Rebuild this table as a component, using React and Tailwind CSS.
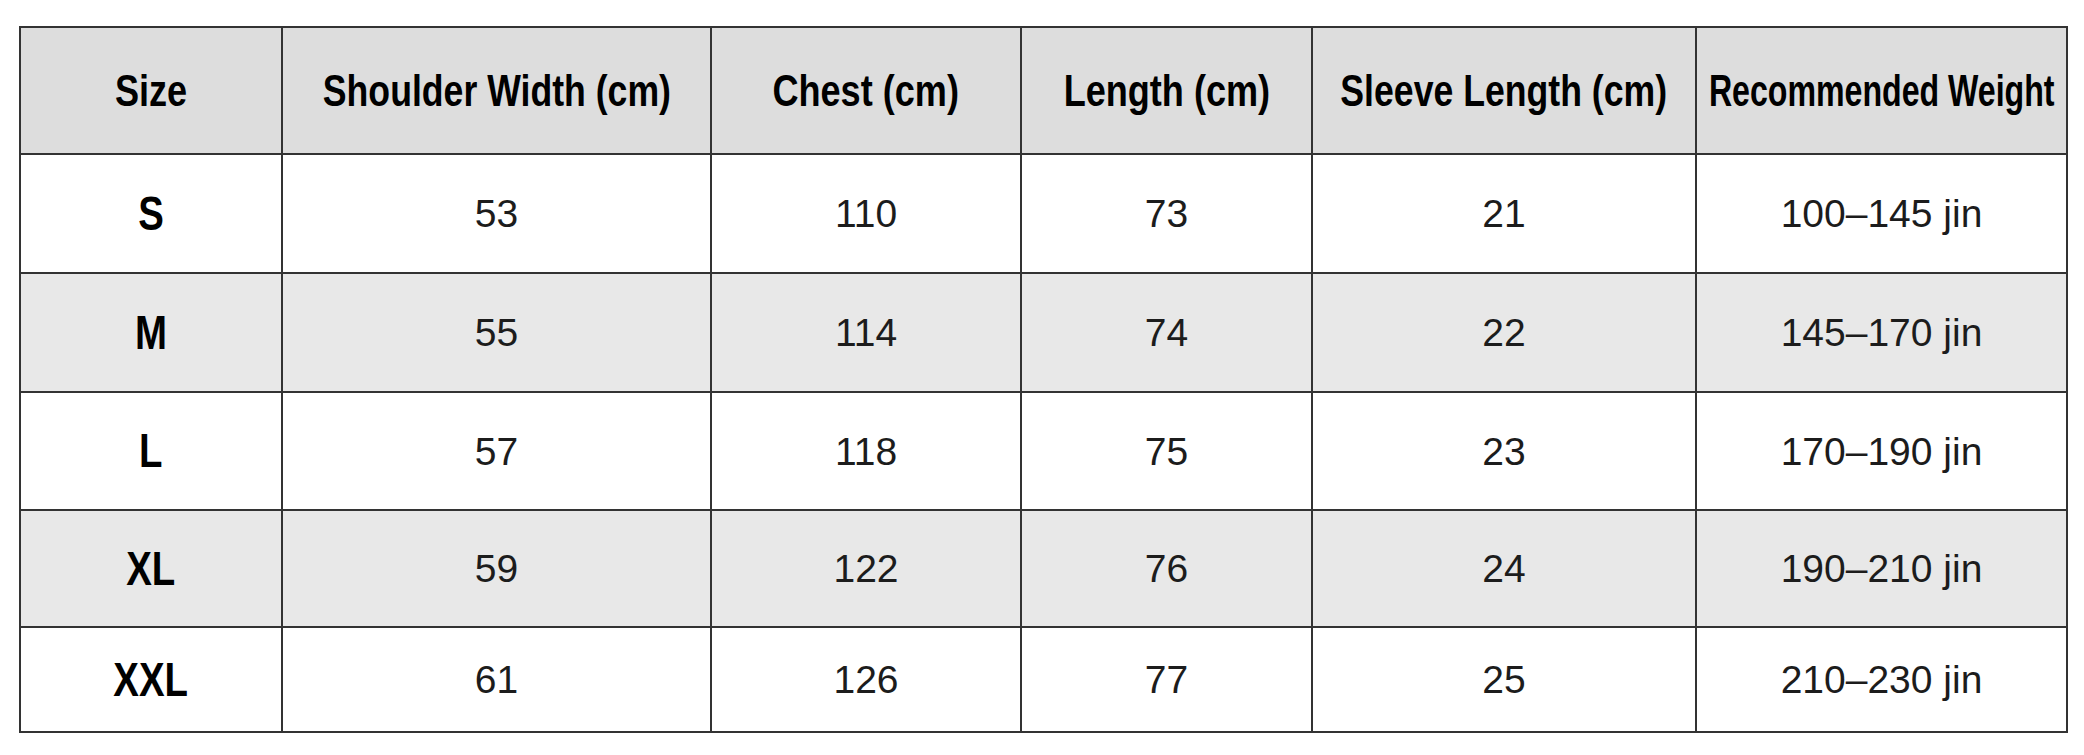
const headers = [
  { t: "Size", sx: "scale-x-[0.82]" },
  { t: "Shoulder Width (cm)", sx: "scale-x-[0.81]" },
  { t: "Chest (cm)", sx: "scale-x-[0.82]" },
  { t: "Length (cm)", sx: "scale-x-[0.82]" },
  { t: "Sleeve Length (cm)", sx: "scale-x-[0.81]" },
  { t: "Recommended Weight", sx: "scale-x-[0.73]" },
];

const rows = [
  { size: "S", shoulder: 53, chest: 110, length: 73, sleeve: 21, weight: "100–145 jin", h: "h-[119px]", bg: "bg-white" },
  { size: "M", shoulder: 55, chest: 114, length: 74, sleeve: 22, weight: "145–170 jin", h: "h-[119px]", bg: "bg-[#e8e8e8]" },
  { size: "L", shoulder: 57, chest: 118, length: 75, sleeve: 23, weight: "170–190 jin", h: "h-[118px]", bg: "bg-white" },
  { size: "XL", shoulder: 59, chest: 122, length: 76, sleeve: 24, weight: "190–210 jin", h: "h-[117px]", bg: "bg-[#e8e8e8]" },
  { size: "XXL", shoulder: 61, chest: 126, length: 77, sleeve: 25, weight: "210–230 jin", h: "h-[105px]", bg: "bg-white" },
];

const cell = "border-2 border-[#333] text-center align-middle p-0";
const num = `${cell} font-['Liberation_Sans',Arial,sans-serif] text-[39px] text-[#1c1c1c] leading-none whitespace-nowrap`;

function Squeezed({ children, sx, size }) {
  return (
    <div className="flex justify-center items-center overflow-visible">
      <span
        className={`inline-block shrink-0 whitespace-nowrap font-['Liberation_Sans',Arial,sans-serif] font-bold text-black leading-none ${size} ${sx}`}
      >
        {children}
      </span>
    </div>
  );
}

export default function App() {
  return (
    <div className="w-[2084px] h-[755px] bg-white pt-[26px] pl-[19px] overflow-hidden">
      <table className="table-fixed border-collapse w-[2047px]">
        <colgroup>
          <col className="w-[262px]" />
          <col className="w-[429px]" />
          <col className="w-[310px]" />
          <col className="w-[291px]" />
          <col className="w-[384px]" />
          <col className="w-[371px]" />
        </colgroup>
        <thead>
          <tr className="h-[127px] bg-[#dddddd]">
            {headers.map((h) => (
              <th key={h.t} className={cell}>
                <Squeezed sx={h.sx} size="text-[44px]">
                  {h.t}
                </Squeezed>
              </th>
            ))}
          </tr>
        </thead>
        <tbody>
          {rows.map((r) => (
            <tr key={r.size} className={`${r.h} ${r.bg}`}>
              <td className={cell}>
                <Squeezed sx="scale-x-[0.8]" size="text-[48px]">
                  {r.size}
                </Squeezed>
              </td>
              <td className={num}>{r.shoulder}</td>
              <td className={num}>{r.chest}</td>
              <td className={num}>{r.length}</td>
              <td className={num}>{r.sleeve}</td>
              <td className={num}>{r.weight}</td>
            </tr>
          ))}
        </tbody>
      </table>
    </div>
  );
}
